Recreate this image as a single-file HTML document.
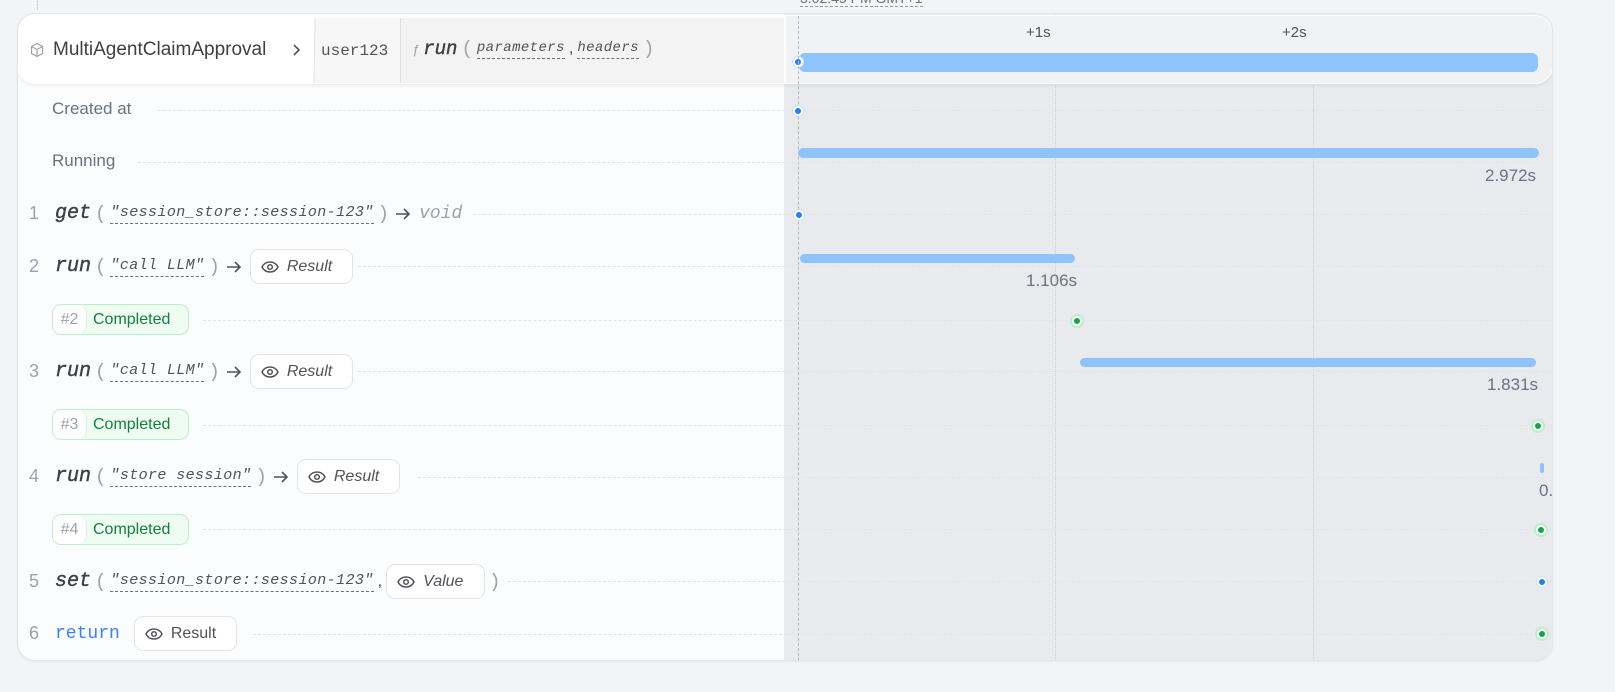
<!DOCTYPE html>
<html><head><style>
*{box-sizing:border-box;margin:0;padding:0}
body{width:1615px;height:692px;background:#f3f4f6;font-family:"Liberation Sans",sans-serif;position:relative;overflow:hidden}
.a{position:absolute}
.card{left:17px;top:13px;width:1536px;height:648px;border-radius:18px;background:#fbfcfd;border:1px solid #e3e5e9;overflow:hidden;box-shadow:0 1px 2px rgba(0,0,0,.06)}
.right{left:766px;top:0;width:770px;height:648px;background:#e9eaee}
.vl{width:0;border-left:1px dotted #cfd1d6}
.hd{border-top:1px dashed #e2e4e8;height:0}
.mono{font-family:"Liberation Mono",monospace;font-style:italic}
.fn{font-size:20px;color:#3f3f46;font-weight:normal;-webkit-text-stroke:.4px #3f3f46}
.par{font-size:19px;color:#a1a1aa;font-family:"Liberation Mono",monospace;}
.str{font-size:15px;color:#52525b;border-bottom:1px dashed #71717a;padding-bottom:2px;letter-spacing:.4px}
.num{font-size:18px;color:#9ca3af;width:14px}
.btn{border:1px solid #e2e4e8;background:#fff;border-radius:9px;height:35px;font-size:16px;color:#52525b;display:flex;align-items:center;padding-left:10px;gap:8px}
.row{display:flex;align-items:center;gap:4px}
.comp{height:31px;border:1px solid #bbf0c8;background:#effcf2;border-radius:9px;display:flex;align-items:center;font-size:16px;color:#15803d}
.comp b{font-weight:normal;background:#fff;color:#9ca3af;height:29px;border-radius:8px;width:33px;display:flex;align-items:center;justify-content:center;margin-right:7px;box-shadow:1px 0 0 #d7f3dd}
.bar{background:#8fc3fb;border-radius:6px}
.dot{width:10px;height:10px;border-radius:50%;border:2px solid #fff}
.db{background:#2a7cf6;box-shadow:0 0 0 1px #cfe0fb}
.dg{background:#16a34a;box-shadow:0 0 0 2px #b6f0c6}
.lab{font-size:17px;color:#6b7280}
.arr{margin:0 4px 0 2px}
</style></head><body>
<div class="a" style="left:37px;top:0;height:10px;border-left:1px dashed #ccc"></div>
<div class="a" style="left:800px;top:-10px;font-size:14px;color:#6b7280;border-bottom:1px dashed #999">3:02:45 PM GMT+1</div>
<div class="a card">
 <div class="a right"></div>
 <div class="a vl" style="left:1037px;top:0;height:648px"></div>
 <div class="a vl" style="left:1295px;top:0;height:648px"></div>
 <div class="a" style="left:-1px;top:1px;width:1536px;height:69px;border-radius:18px;border:1px solid #fff;box-shadow:0 2px 3px rgba(0,0,0,.06);overflow:hidden">
  <div class="a" style="left:0;top:0;width:300px;height:69px;background:#fff"></div>
  <div class="a" style="left:296px;top:2px;width:90px;height:67px;background:#f7f7f8;border-left:1px solid #e2e2e4;transform:skewX(-1deg)"></div>
  <div class="a" style="left:382px;top:2px;width:384px;height:67px;background:#f3f3f4;border-left:1px solid #e2e2e4"></div>
  <div class="a" style="left:766px;top:0;width:770px;height:69px;background:#f1f2f4;border-left:2px solid #fff"></div>
  <svg class="a" style="left:11px;top:26px" width="16" height="16" viewBox="0 0 16 16" fill="none" stroke="#9ca3af" stroke-width="1.2"><path d="M8 1.5l5.5 3v7L8 14.5l-5.5-3v-7z M2.5 4.5L8 7.5l5.5-3 M8 7.5v7"/></svg>
  <div class="a" style="left:35px;top:23px;font-size:19px;color:#3f3f46">MultiAgentClaimApproval</div>
  <svg class="a" style="left:273px;top:27px" width="10" height="14" viewBox="0 0 10 14" fill="none" stroke="#52525b" stroke-width="1.6"><path d="M3 2l5 5-5 5"/></svg>
  <div class="a" style="left:303px;top:26px;font-size:16px;color:#52525b;font-family:'Liberation Mono',monospace">user123</div>
  <div class="a row" style="left:394px;top:22px"><span style="font-size:13px;color:#a1a1aa;font-style:italic">ƒ</span><span class="mono fn" style="font-size:19px">run</span><span class="par">(</span><span class="mono str" style="font-size:14px">parameters</span><span style="color:#3f3f46">,</span><span class="mono str" style="font-size:14px">headers</span><span class="par">)</span></div>
  <div class="a" style="left:1008px;top:8px;font-size:15px;color:#52525b">+1s</div>
  <div class="a" style="left:1264px;top:8px;font-size:15px;color:#52525b">+2s</div>
  <div class="a bar" style="left:781px;top:37px;width:739px;height:19px"></div>
  <div class="a dot db" style="left:775px;top:41px"></div>
 </div>
 <div class="a" style="left:780px;top:-13px;height:680px;border-left:1px dashed #b5b8be"></div>

 <div class="a hd" style="left:140px;top:96px;width:1396px"></div>
 <div class="a lab" style="left:34px;top:85px">Created at</div>
 <div class="a dot db" style="left:775px;top:92px"></div>

 <div class="a hd" style="left:120px;top:148px;width:1396px"></div>
 <div class="a lab" style="left:34px;top:137px">Running</div>
 <div class="a bar" style="left:780px;top:134px;width:741px;height:10px"></div>
 <div class="a lab" style="left:1467px;top:152px">2.972s</div>

 <div class="a hd" style="left:455px;top:200px;width:1080px"></div>
 <div class="a row" style="left:11px;top:188px"><span class="num">1</span><span class="mono fn" style="margin-left:8px">get</span><span class="par">(</span><span class="mono str">"session_store::session-123"</span><span class="par">)</span><svg class="arr" width="16" height="14" viewBox="0 0 16 14" fill="none" stroke="#52525b" stroke-width="1.6"><path d="M1 7h13M9 2l5 5-5 5"/></svg><span class="mono" style="font-size:18px;color:#a1a1aa">void</span></div>
 <div class="a dot db" style="left:776px;top:196px"></div>

 <div class="a hd" style="left:340px;top:252px;width:1196px"></div>
 <div class="a row" style="left:11px;top:235px"><span class="num">2</span><span class="mono fn" style="margin-left:8px">run</span><span class="par">(</span><span class="mono str">"call LLM"</span><span class="par">)</span><svg class="arr" width="16" height="14" viewBox="0 0 16 14" fill="none" stroke="#52525b" stroke-width="1.6"><path d="M1 7h13M9 2l5 5-5 5"/></svg><div class="btn" style="width:103px"><svg width="18" height="12" viewBox="0 0 18 12" fill="none" stroke="#52525b" stroke-width="1.5"><path d="M1 6C3 2 6 1 9 1s6 1 8 5c-2 4-5 5-8 5S3 10 1 6z"/><circle cx="9" cy="6" r="2.3"/></svg><i>Result</i></div></div>
 <div class="a bar" style="left:782px;top:240px;width:275px;height:9px"></div>
 <div class="a lab" style="left:1008px;top:257px">1.106s</div>

 <div class="a hd" style="left:185px;top:306px;width:1350px"></div>
 <div class="a comp" style="left:34px;top:290px;width:137px"><b>#2</b>Completed</div>
 <div class="a dot dg" style="left:1054px;top:302px"></div>

 <div class="a hd" style="left:340px;top:357px;width:1196px"></div>
 <div class="a row" style="left:11px;top:340px"><span class="num">3</span><span class="mono fn" style="margin-left:8px">run</span><span class="par">(</span><span class="mono str">"call LLM"</span><span class="par">)</span><svg class="arr" width="16" height="14" viewBox="0 0 16 14" fill="none" stroke="#52525b" stroke-width="1.6"><path d="M1 7h13M9 2l5 5-5 5"/></svg><div class="btn" style="width:103px"><svg width="18" height="12" viewBox="0 0 18 12" fill="none" stroke="#52525b" stroke-width="1.5"><path d="M1 6C3 2 6 1 9 1s6 1 8 5c-2 4-5 5-8 5S3 10 1 6z"/><circle cx="9" cy="6" r="2.3"/></svg><i>Result</i></div></div>
 <div class="a bar" style="left:1062px;top:344px;width:456px;height:9px"></div>
 <div class="a lab" style="left:1469px;top:361px">1.831s</div>

 <div class="a hd" style="left:185px;top:411px;width:1350px"></div>
 <div class="a comp" style="left:34px;top:395px;width:137px"><b>#3</b>Completed</div>
 <div class="a dot dg" style="left:1515px;top:407px"></div>

 <div class="a hd" style="left:400px;top:463px;width:1136px"></div>
 <div class="a row" style="left:11px;top:445px"><span class="num">4</span><span class="mono fn" style="margin-left:8px">run</span><span class="par">(</span><span class="mono str">"store session"</span><span class="par">)</span><svg class="arr" width="16" height="14" viewBox="0 0 16 14" fill="none" stroke="#52525b" stroke-width="1.6"><path d="M1 7h13M9 2l5 5-5 5"/></svg><div class="btn" style="width:103px"><svg width="18" height="12" viewBox="0 0 18 12" fill="none" stroke="#52525b" stroke-width="1.5"><path d="M1 6C3 2 6 1 9 1s6 1 8 5c-2 4-5 5-8 5S3 10 1 6z"/><circle cx="9" cy="6" r="2.3"/></svg><i>Result</i></div></div>
 <div class="a bar" style="left:1522px;top:449px;width:4px;height:10px"></div>
 <div class="a lab" style="left:1521px;top:467px">0.</div>

 <div class="a hd" style="left:185px;top:515px;width:1350px"></div>
 <div class="a comp" style="left:34px;top:500px;width:137px"><b>#4</b>Completed</div>
 <div class="a dot dg" style="left:1518px;top:511px"></div>

 <div class="a hd" style="left:490px;top:567px;width:1046px"></div>
 <div class="a row" style="left:11px;top:550px"><span class="num">5</span><span class="mono fn" style="margin-left:8px">set</span><span class="par">(</span><span class="mono str">"session_store::session-123"</span><span style="color:#3f3f46">,</span><div class="btn" style="width:99px"><svg width="18" height="12" viewBox="0 0 18 12" fill="none" stroke="#52525b" stroke-width="1.5"><path d="M1 6C3 2 6 1 9 1s6 1 8 5c-2 4-5 5-8 5S3 10 1 6z"/><circle cx="9" cy="6" r="2.3"/></svg><i>Value</i></div><span class="par">)</span></div>
 <div class="a dot db" style="left:1519px;top:563px"></div>

 <div class="a hd" style="left:235px;top:620px;width:1300px"></div>
 <div class="a row" style="left:11px;top:602px"><span class="num">6</span><span style="font-family:'Liberation Mono',monospace;font-size:18px;color:#3b82f6;margin-left:8px;margin-right:10px">return</span><div class="btn" style="width:103px"><svg width="18" height="12" viewBox="0 0 18 12" fill="none" stroke="#52525b" stroke-width="1.5"><path d="M1 6C3 2 6 1 9 1s6 1 8 5c-2 4-5 5-8 5S3 10 1 6z"/><circle cx="9" cy="6" r="2.3"/></svg>Result</div></div>
 <div class="a dot dg" style="left:1519px;top:615px"></div>
</div>
</body></html>
